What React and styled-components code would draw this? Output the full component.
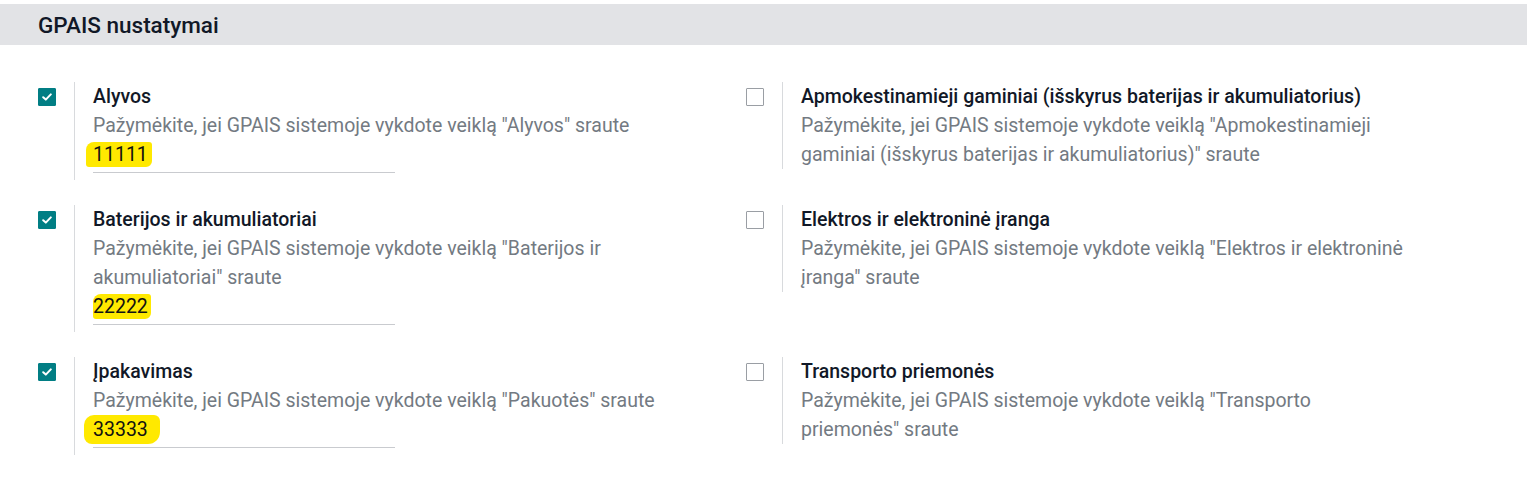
import React from 'react';
import styled, { createGlobalStyle } from 'styled-components';

const GlobalStyle = createGlobalStyle`
  body {
    margin: 0;
    background: #ffffff;
    font-family: Roboto, "Noto Sans", "Liberation Sans", sans-serif;
  }
`;

const settings = [
  {
    label: 'Alyvos',
    desc: ['Pažymėkite, jei GPAIS sistemoje vykdote veiklą "Alyvos" sraute'],
    checked: true,
    value: '11111',
    mark: 'a',
  },
  {
    label: 'Apmokestinamieji gaminiai (išskyrus baterijas ir akumuliatorius)',
    desc: [
      'Pažymėkite, jei GPAIS sistemoje vykdote veiklą "Apmokestinamieji',
      'gaminiai (išskyrus baterijas ir akumuliatorius)" sraute',
    ],
    checked: false,
  },
  {
    label: 'Baterijos ir akumuliatoriai',
    desc: [
      'Pažymėkite, jei GPAIS sistemoje vykdote veiklą "Baterijos ir',
      'akumuliatoriai" sraute',
    ],
    checked: true,
    value: '22222',
    mark: 'b',
  },
  {
    label: 'Elektros ir elektroninė įranga',
    desc: [
      'Pažymėkite, jei GPAIS sistemoje vykdote veiklą "Elektros ir elektroninė',
      'įranga" sraute',
    ],
    checked: false,
  },
  {
    label: 'Įpakavimas',
    desc: ['Pažymėkite, jei GPAIS sistemoje vykdote veiklą "Pakuotės" sraute'],
    checked: true,
    value: '33333',
    mark: 'c',
  },
  {
    label: 'Transporto priemonės',
    desc: [
      'Pažymėkite, jei GPAIS sistemoje vykdote veiklą "Transporto',
      'priemonės" sraute',
    ],
    checked: false,
  },
];

function App() {
  return (
    <Page>
      <GlobalStyle />
      <SectionHeader>GPAIS nustatymai</SectionHeader>
      <SettingsGrid>
        {settings.map((s) => (
          <SettingBox key={s.label}>
            <CheckCol>
              <Checkbox checked={s.checked}>
                {s.checked && (
                  <svg width="10" height="8" viewBox="0 0 10 8">
                    <path d="M1.2 4.2 L3.8 6.6 L8.8 1.4" fill="none" stroke="#fff" strokeWidth="2" strokeLinecap="round" strokeLinejoin="round" />
                  </svg>
                )}
              </Checkbox>
            </CheckCol>
            <RightPane>
              <Label>{s.label}</Label>
              <Description>
                {s.desc.map((line, i) => (
                  <span key={i}>
                    {line}
                    {i < s.desc.length - 1 && <br />}
                  </span>
                ))}
              </Description>
              {s.value && (
                <Field>
                  <Highlight kind={s.mark}>{s.value}</Highlight>
                </Field>
              )}
            </RightPane>
          </SettingBox>
        ))}
      </SettingsGrid>
    </Page>
  );
}

export default App;

const Page = styled.div`
  padding-top: 4px;
  width: 1527px;
`;

const SectionHeader = styled.div`
  height: 41px;
  background-color: #e2e3e6;
  padding-left: 38px;
  display: flex;
  align-items: center;
  font-size: 22.5px;
  font-weight: 500;
  color: #111827;
`;

const SettingsGrid = styled.div`
  display: grid;
  grid-template-columns: 708px 708px;
  row-gap: 25px;
  padding: 37px 0 0 38px;
  align-items: start;
`;

const SettingBox = styled.div`
  display: flex;
`;

const CheckCol = styled.div`
  width: 36px;
  padding-top: 6px;
  flex-shrink: 0;
`;

const Checkbox = styled.div`
  width: 18px;
  height: 18px;
  box-sizing: border-box;
  border-radius: 1px;
  display: flex;
  align-items: center;
  justify-content: center;
  background-color: ${(p) => (p.checked ? '#017e84' : '#ffffff')};
  border: 1px solid ${(p) => (p.checked ? '#017e84' : '#9a9ea4')};
`;

const RightPane = styled.div`
  border-left: 1px solid #d8dadd;
  padding-left: 18px;
  min-width: 0;
`;

const Label = styled.div`
  font-size: 19.5px;
  font-weight: 500;
  line-height: 29px;
  color: #111827;
`;

const Description = styled.div`
  font-size: 19.5px;
  line-height: 29px;
  color: #737a82;
  white-space: nowrap;
`;

const Field = styled.div`
  width: 302px;
  line-height: 29px;
  font-size: 19.5px;
  color: #111111;
  padding-bottom: 3px;
  border-bottom: 1px solid #c9cbcf;
  margin-bottom: 7px;
`;

const Highlight = styled.span`
  display: inline-block;
  background-color: #ffe900;
  line-height: 25px;
  padding: ${(p) => (p.kind === 'c' ? '2px 12px 2px 9px' : p.kind === 'a' ? '0 4px 0 7px' : '0 3px 0 0')};
  margin-left: ${(p) => (p.kind === 'c' ? '-9px' : p.kind === 'a' ? '-7px' : '0')};
  border-radius: ${(p) => (p.kind === 'c' ? '10px 6px 12px 8px' : '8px 3px 6px 3px')};
`;
